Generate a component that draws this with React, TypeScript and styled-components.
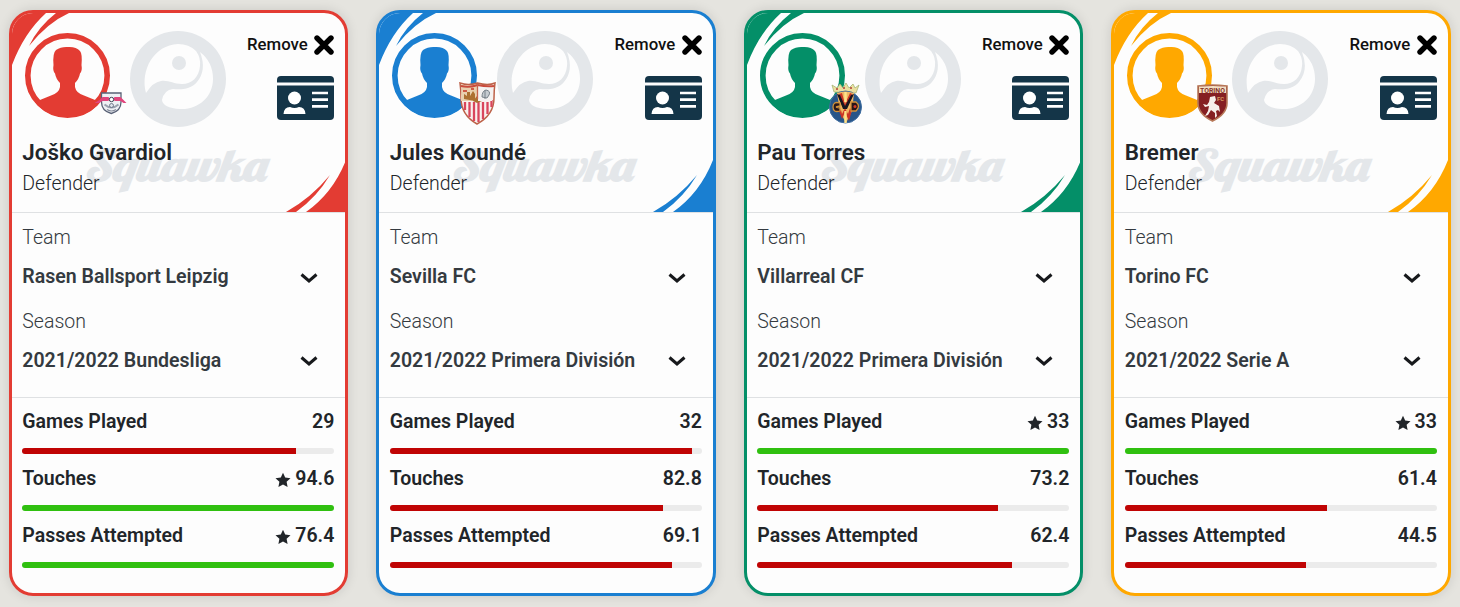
import { HTMLAttributes, ReactNode } from "react";
import styled, { createGlobalStyle } from "styled-components";

const GlobalStyle = createGlobalStyle`
  * {
    box-sizing: border-box;
  }

  body {
    margin: 0;
    background: #e5e4df;
    font-family: Roboto, "Liberation Sans", sans-serif;
    color: #212529;
  }
`;

const colors = {
  red: "#e33c33",
  blue: "#1a7fd1",
  green: "#048f68",
  yellow: "#ffa800",
  best: "#30c010",
  worse: "#c00404",
  navy: "#143548",
  watermark: "#e4e7ea",
};

type Stat = { label: string; value: string; percent: number; best?: boolean };

type Player = {
  name: string;
  position: string;
  team: string;
  season: string;
  color: string;
  crest: ReactNode;
  stats: Stat[];
};

const LeipzigCrest = () => (
  <>
    <path
      d="M11.500 11h19.500v9c0 6-4 10-9.700 11.500C15.500 30 11.500 26 11.500 20z"
      fill="#eef0f4"
      stroke="#596176"
      strokeWidth="1.300"
    />
    <path d="M14.500 22.500q7 6 14 0" fill="none" stroke="#9aa1af" strokeWidth="2" />
    <path d="M17 27.500q4.500 3 9 0" fill="none" stroke="#858c9c" strokeWidth="1.200" />
    <path
      d="M4.500 21l5-3 3-3 6 0 2 3-3 1-5 0-3.500 2zM36.500 21l-3-3-3-3-6 0-2 3 3 1 5 0 3 2z"
      fill="#e0457c"
    />
    <circle cx="21.500" cy="17.500" r="2.200" fill="#fff" stroke="#3d4052" />
    <circle cx="21.500" cy="23.500" r="2" fill="#dfe3ea" stroke="#5b6478" strokeWidth=".8" />
  </>
);

const SevillaCrest = () => (
  <>
    <path
      d="M3 1q8 3 17.500 0Q31 4 38 1q-1 7-1 15 0 17-17 26Q4 33 4 16 4 8 3 1z"
      fill="#f8f1ee"
      stroke="#bd6249"
      strokeWidth="1.500"
    />
    <path
      d="M8 20v8M12.500 20v15M17 20v19M21.500 20v20M26 20v17M30.500 20v12M34.500 18v7"
      stroke="#d9465c"
      strokeWidth="2.300"
    />
    <path d="M4 14q1-8 0-12 8 3 16 0v17H4z" fill="#e9d0ae" />
    <path d="M7 17v-5l3 2v-4h3v4l3-5 2 3v7zM16 19l4-5 3 2 2 3-5 2z" fill="#ac7131" />
    <path d="M6 9h4M14 7h3" stroke="#cf5b45" strokeWidth="2" />
    <path d="M21 3q8 1 15 0l-1 16H21z" fill="#f4f2f1" />
    <path
      d="M25 15q0-6 4-7 5 1 3 5l-2 3zM28 8v9"
      fill="#c5cbd0"
      stroke="#78828a"
      strokeWidth="1"
    />
    <path d="M4 4q8 2 16.500-1Q30 5 37 4" fill="none" stroke="#c94b3c" strokeWidth="2" />
    <path d="M20.500 2v15" stroke="#c7644d" strokeWidth="1.300" />
  </>
);

const VillarrealCrest = () => (
  <>
    <path
      d="M9 10L7 3l5 3 3-4 3 4 3-5 3 5 4-4 2 4 4-3-3 8z"
      fill="#ece0a0"
      stroke="#a4b577"
      strokeWidth=".8"
    />
    <path d="M11 7h2M18 6h2M25 6h2" stroke="#bf6851" strokeWidth="2" />
    <circle cx="20.500" cy="25" r="16" fill="#275589" stroke="#3e6da0" />
    <path d="M12 11q8-3 17 0l-2 18-6 12-6-11z" fill="#f0b663" />
    <path
      d="M14 12l6 16 7-16-2-1-5 11-3-11zM14 29l3 8 3-7 4 9 3-11-2-2-2 6-3-6-3 6-1-4z"
      fill="#cb3326"
    />
    <path d="M12 12l3 1 5 11 6-11 3-1-7 15h-4z" fill="#18151f" />
    <path
      d="M15 21q-7-2-7 4t7 4v-3l-4-1 4-1zM26 20h5q5 4 0 9h-5z"
      fill="#29161a"
      stroke="#d39138"
      strokeWidth="1.300"
    />
    <path d="M20.500 10v10M20.500 29v12" stroke="#ffe28b" strokeWidth="2.400" />
    <circle cx="30" cy="24.500" r="1.500" fill="#d53b29" />
  </>
);

const TorinoCrest = () => (
  <>
    <path
      d="M6 4q14-2 29 0v17q0 11-14.500 18Q6 32 6 21z"
      fill="#851f22"
      stroke="#b77858"
      strokeWidth="1.600"
    />
    <path d="M7 4.500q14-1 27 0V11H7z" fill="#f2dfc4" />
    <text
      x="20.500"
      y="10.500"
      textAnchor="middle"
      textLength="25"
      lengthAdjust="spacingAndGlyphs"
      fontSize="7"
      fontWeight="700"
      fill="#86362a"
    >
      TORINO
    </text>
    <text x="25" y="18.500" fontSize="6" fontWeight="700" fill="#d79c60">
      FC
    </text>
    <path
      d="M18 15l5-1 1 4-2 3 5 3 1 6-2-2-2 1 1 5-2 2v-5l-4-3-3 5-3 1 3-5 1-5-4 1-2-3 4 1 2-3z"
      fill="#f6eee9"
    />
  </>
);

const players: Player[] = [
  {
    name: "Joško Gvardiol",
    position: "Defender",
    team: "Rasen Ballsport Leipzig",
    season: "2021/2022 Bundesliga",
    color: colors.red,
    crest: <LeipzigCrest />,
    stats: [
      { label: "Games Played", value: "29", percent: 87.6 },
      { label: "Touches", value: "94.6", percent: 100, best: true },
      { label: "Passes Attempted", value: "76.4", percent: 100, best: true },
    ],
  },
  {
    name: "Jules Koundé",
    position: "Defender",
    team: "Sevilla FC",
    season: "2021/2022 Primera División",
    color: colors.blue,
    crest: <SevillaCrest />,
    stats: [
      { label: "Games Played", value: "32", percent: 97 },
      { label: "Touches", value: "82.8", percent: 87.5 },
      { label: "Passes Attempted", value: "69.1", percent: 90.3 },
    ],
  },
  {
    name: "Pau Torres",
    position: "Defender",
    team: "Villarreal CF",
    season: "2021/2022 Primera División",
    color: colors.green,
    crest: <VillarrealCrest />,
    stats: [
      { label: "Games Played", value: "33", percent: 100, best: true },
      { label: "Touches", value: "73.2", percent: 77.3 },
      { label: "Passes Attempted", value: "62.4", percent: 81.5 },
    ],
  },
  {
    name: "Bremer",
    position: "Defender",
    team: "Torino FC",
    season: "2021/2022 Serie A",
    color: colors.yellow,
    crest: <TorinoCrest />,
    stats: [
      { label: "Games Played", value: "33", percent: 100, best: true },
      { label: "Touches", value: "61.4", percent: 64.8 },
      { label: "Passes Attempted", value: "44.5", percent: 58.1 },
    ],
  },
];

const Page = styled.main`
  display: flex;
  gap: 28px;
  height: 607px;
  padding: 10px 9px 11px 8.800px;
  overflow: hidden;
`;

const Card = styled.article<{ $color: string }>`
  flex: 0 0 339.5px;
  display: flex;
  flex-direction: column;
  overflow: hidden;
  border: 3px solid ${(props) => props.$color};
  border-radius: 24px;
  background: #fdfdfd;
  box-shadow: 0 0 12px rgba(0, 0, 0, 0.12);
`;

const Header = styled.header`
  position: relative;
  flex: none;
  display: flex;
  flex-direction: column;
  height: 200px;
  padding: 20px 11px 0 10.500px;
  border-bottom: 1px solid #dfe1e3;
`;

const Backdrop = styled.svg`
  position: absolute;
  top: 0;
  left: 0;
  width: 334px;
  height: 199px;

  & text {
    font-family: Lobster, "Liberation Serif", serif;
    font-size: 43px;
    font-style: italic;
    font-weight: 700;
  }
`;

const HeaderTop = styled.div`
  position: relative;
  display: flex;
  justify-content: space-between;
  height: 94px;
  padding-left: 2.500px;
`;

const AvatarWrap = styled.div`
  position: relative;
  width: 85px;
  height: 85px;
`;

const Crest = styled.svg`
  position: absolute;
  top: 49px;
  left: 65px;
  width: 44px;
  height: 44px;
`;

const Actions = styled.div`
  display: flex;
  flex-direction: column;
  align-items: flex-end;
  gap: 20px;
`;

const RemoveButton = styled.button`
  display: flex;
  align-items: center;
  gap: 6.500px;
  height: 23px;
  padding: 0;
  border: 0;
  background: none;
  font: 500 16.800px/23px Roboto, sans-serif;
  color: #111;
`;

const Name = styled.h2`
  position: relative;
  margin: 10.500px 0 0;
  font-size: 22.400px;
  line-height: 29px;
  font-weight: 600;
  white-space: nowrap;
`;

const Position = styled.div`
  position: relative;
  margin-top: 2px;
  font-size: 19.500px;
  line-height: 30px;
  font-weight: 350;
`;

const Filters = styled.section`
  flex: none;
  height: 185px;
  padding: 10px 11px 0 10.500px;
  border-bottom: 1px solid #dfe1e3;
`;

const Filter = styled.div`
  height: 83.500px;
`;

const FilterLabel = styled.div`
  font-size: 19.500px;
  line-height: 30px;
  font-weight: 350;
  color: #343a40;
`;

const FilterValue = styled.div`
  display: flex;
  align-items: center;
  justify-content: space-between;
  height: 30px;
  margin-top: 8.500px;
  padding-right: 16px;
  font-size: 19.550px;
  font-weight: 600;
  color: #343a40;
  white-space: nowrap;

  & svg {
    margin-top: 2px;
  }
`;

const Stats = styled.section`
  padding: 8.500px 11px 0 10.500px;
`;

const StatItem = styled.div`
  height: 57px;
`;

const StatRow = styled.div`
  display: flex;
  align-items: center;
  justify-content: space-between;
  height: 30px;
  font-size: 19.500px;
  font-weight: 600;
`;

const StatValue = styled.span`
  display: flex;
  align-items: center;
  gap: 4px;

  & svg {
    margin-top: 2px;
  }
`;

const Track = styled.div`
  height: 6px;
  margin-top: 11.500px;
  overflow: hidden;
  border-radius: 3px;
  background: #ebebeb;
`;

const Fill = styled.div<{ $best?: boolean }>`
  height: 100%;
  background: ${(props) => (props.$best ? colors.best : colors.worse)};
`;

const HeaderBackdrop = ({ color }: { color: string }) => (
  <Backdrop viewBox="0 0 334 199">
    <g fill={color}>
      <path d="M0 0H34Q12 20 0 52Z" />
      <path d="M44 0H57Q35 10 17 33Q26 14 44 0Z" />
      <path d="M334 147V199H294Q321 180 334 147Z" />
      <path d="M274 199H284Q305 184 318 162Q299 185 274 199Z" />
    </g>
    <g transform="translate(118 18)">
      <circle cx="48" cy="48" r="48" fill={colors.watermark} />
      <path
        d="M16 62C10 39 24 14 48 13Q59 13 66 20Q71 27 70 35C69 46 62 53 52 53C43 53 39 49 31 50Q23 51 16 62Z"
        fill="#fdfdfd"
      />
      <path
        d="M70 21Q83 31 83 48C83 66 68 79 50 78Q33 77 32 69Q34 59 43 58C52 59 61 58 67 51Q77 39 70 21Z"
        fill="#fdfdfd"
      />
      <circle cx="49" cy="32" r="7" fill={colors.watermark} />
    </g>
    <text
      transform="translate(73 168) skewX(8)"
      textLength="181"
      lengthAdjust="spacingAndGlyphs"
      fill={colors.watermark}
    >
      Squawka
    </text>
  </Backdrop>
);

const Avatar = ({ color }: { color: string }) => (
  <svg width="85" height="85" viewBox="0 0 85 85">
    <circle cx="42.500" cy="42.500" r="39.700" fill="#fdfdfd" stroke={color} strokeWidth="5.600" />
    <path
      d="M10 69L26 62.500Q34 60 35 54V50Q31 46 30 40.500Q27.500 38 28.500 32Q27.500 20 31 17Q36 13.500 43 14Q51 13.500 55 18Q57.500 21 56.500 32Q57.500 38 55 40.500Q54 46 50 50V54Q51 60 59 62.500L75 69Q63 84 42.500 84T10 69Z"
      fill={color}
    />
  </svg>
);

const IdCard = () => (
  <svg width="57" height="44" viewBox="0 0 57 44">
    <path d="M0 6.500V4Q0 0 4 0H53Q57 0 57 4V6.500Z" fill={colors.navy} />
    <path d="M0 9.500H57V40Q57 44 53 44H4Q0 44 0 40Z" fill={colors.navy} />
    <circle cx="17.500" cy="22" r="6.500" fill="#fff" />
    <path d="M6.500 38Q7 31 13 31Q17.500 33 22 31Q28 31 28.500 38Z" fill="#fff" />
    <path d="M35 17H51M35 23.700H51M35 30.400H51" stroke="#fff" strokeWidth="2.700" />
  </svg>
);

const CloseIcon = () => (
  <svg width="20" height="20" viewBox="0 0 20 20">
    <path d="M3 3L17 17M17 3L3 17" stroke="#000" strokeWidth="5.400" strokeLinecap="round" />
  </svg>
);

const Chevron = () => (
  <svg width="18" height="12" viewBox="0 0 18 12">
    <path d="M1.500 2.500L9 9L16.500 2.500" fill="none" stroke="#17191c" strokeWidth="3" />
  </svg>
);

const Star = () => (
  <svg width="16" height="16" viewBox="0 0 16 16">
    <path
      d="M8 .8L10.200 5.500L15.500 6.200L11.600 9.800L12.600 15L8 12.400L3.400 15L4.400 9.800L.5 6.200L5.800 5.500Z"
      fill="#212529"
    />
  </svg>
);

type SelectProps = {
  label: string;
  value: string;
} & HTMLAttributes<HTMLDivElement>;

const Select = ({ label, value, ...rest }: SelectProps) => (
  <Filter {...rest}>
    <FilterLabel>{label}</FilterLabel>
    <FilterValue>
      {value}
      <Chevron />
    </FilterValue>
  </Filter>
);

const PlayerCard = ({ player }: { player: Player }) => {
  const { name, position, team, season, color, crest, stats } = player;

  return (
    <Card $color={color}>
      <Header>
        <HeaderBackdrop color={color} />
        <HeaderTop>
          <AvatarWrap>
            <Avatar color={color} />
            <Crest viewBox="0 0 44 44">{crest}</Crest>
          </AvatarWrap>
          <Actions>
            <RemoveButton>
              Remove
              <CloseIcon />
            </RemoveButton>
            <IdCard />
          </Actions>
        </HeaderTop>
        <Name>{name}</Name>
        <Position>{position}</Position>
      </Header>
      <Filters>
        <Select label="Team" value={team} />
        <Select label="Season" value={season} />
      </Filters>
      <Stats>
        {stats.map(({ label, value, percent, best }) => (
          <StatItem key={label}>
            <StatRow>
              {label}
              <StatValue>
                {best && <Star />}
                {value}
              </StatValue>
            </StatRow>
            <Track>
              <Fill $best={best} style={{ width: `${percent}%` }} />
            </Track>
          </StatItem>
        ))}
      </Stats>
    </Card>
  );
};

const App = () => (
  <>
    <GlobalStyle />
    <Page>
      {players.map((player) => (
        <PlayerCard key={player.name} player={player} />
      ))}
    </Page>
  </>
);

export default App;
